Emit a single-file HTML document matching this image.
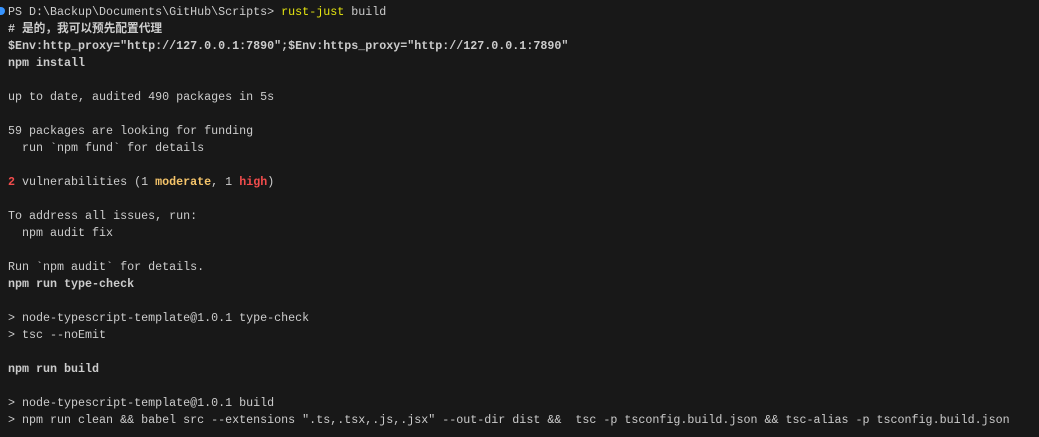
<!DOCTYPE html>
<html><head><meta charset="utf-8"><style>
html,body{margin:0;padding:0;background:#181818;width:1039px;height:437px;overflow:hidden}
pre{margin:0;position:absolute;left:8px;top:4px;font-family:"Liberation Mono","Noto Sans CJK SC",monospace;font-size:11.68px;line-height:17px;color:#cccccc;white-space:pre}
b{font-weight:bold}
.y{color:#e5e510}.r{color:#f14c4c}.o{color:#f5c46a}
.dot{position:absolute;left:-1px;top:7px;width:6px;height:8px;border-radius:0 4px 4px 0;background:#3794ff}
</style></head><body>
<div class="dot"></div>
<pre>PS D:\Backup\Documents\GitHub\Scripts&gt; <span class="y">rust-just</span> build
<b># 是的，我可以预先配置代理</b>
<b>$Env:http_proxy="http://127.0.0.1:7890";$Env:https_proxy="http://127.0.0.1:7890"</b>
<b>npm install</b>

up to date, audited 490 packages in 5s

59 packages are looking for funding
  run `npm fund` for details

<b class="r">2</b> vulnerabilities (1 <b class="o">moderate</b>, 1 <b class="r">high</b>)

To address all issues, run:
  npm audit fix

Run `npm audit` for details.
<b>npm run type-check</b>

&gt; node-typescript-template@1.0.1 type-check
&gt; tsc --noEmit

<b>npm run build</b>

&gt; node-typescript-template@1.0.1 build
&gt; npm run clean &amp;&amp; babel src --extensions ".ts,.tsx,.js,.jsx" --out-dir dist &amp;&amp;  tsc -p tsconfig.build.json &amp;&amp; tsc-alias -p tsconfig.build.json</pre>
</body></html>
